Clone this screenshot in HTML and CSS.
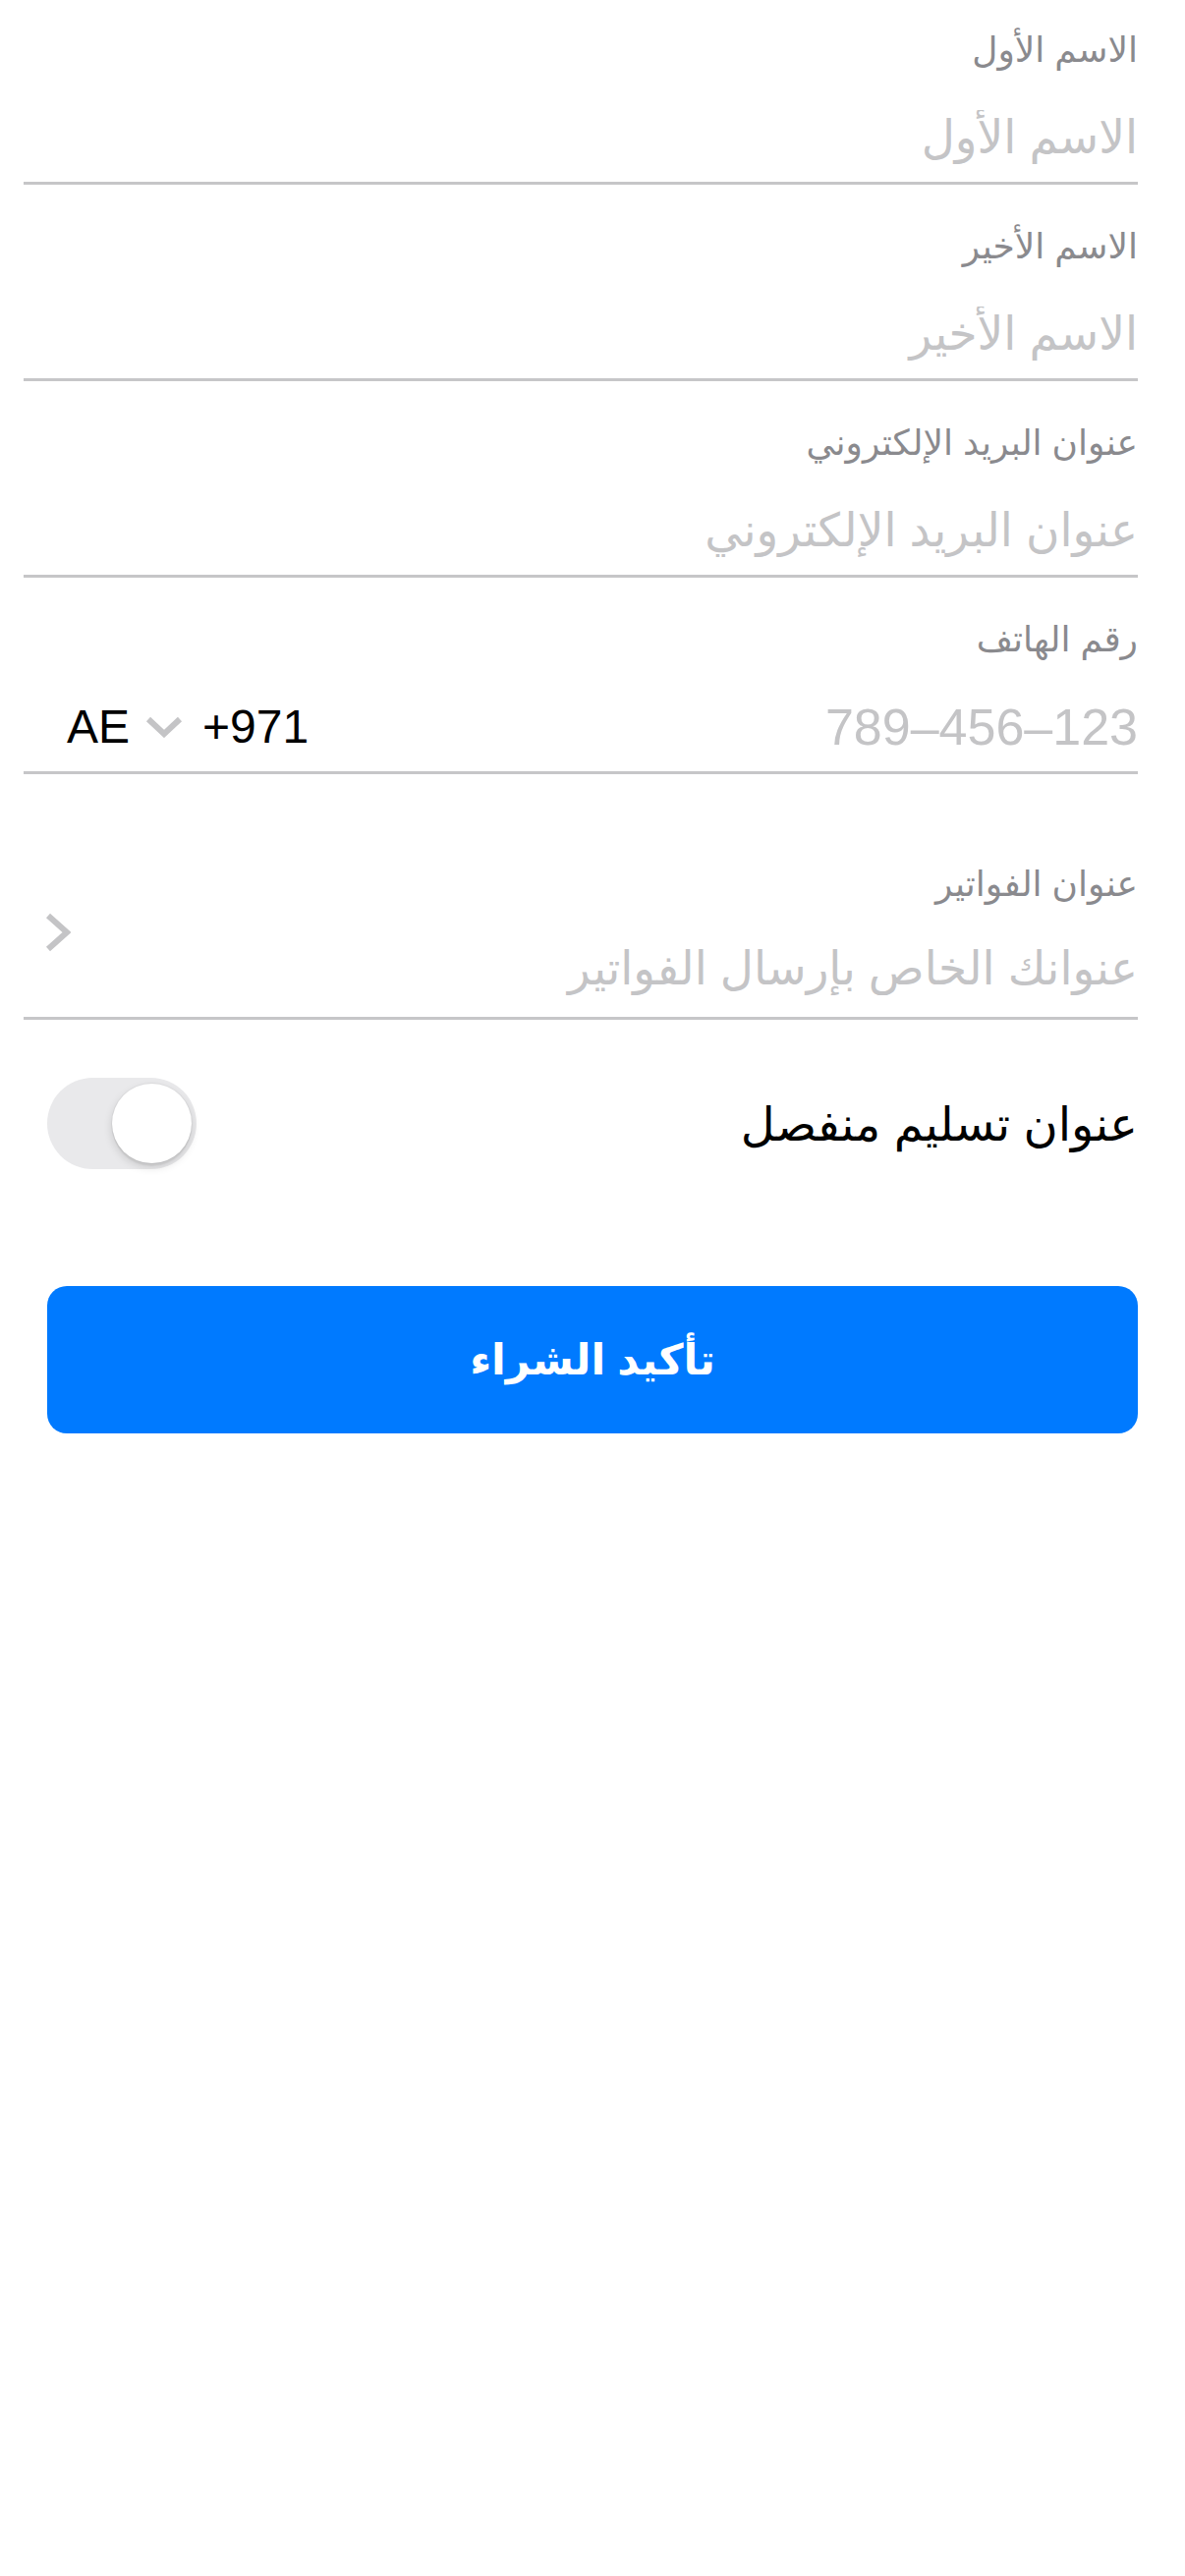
FILE: index.html
```html
<!DOCTYPE html>
<html lang="ar" dir="rtl">
<head>
<meta charset="utf-8">
<title>تأكيد الشراء</title>
<link rel="stylesheet" href="styles.css">
</head>
<body>
<main class="form">
  <div class="field field-first">
    <div class="field-label">الاسم الأول</div>
    <input class="field-input" type="text" placeholder="الاسم الأول">
  </div>
  <div class="field">
    <div class="field-label">الاسم الأخير</div>
    <input class="field-input" type="text" placeholder="الاسم الأخير">
  </div>
  <div class="field">
    <div class="field-label">عنوان البريد الإلكتروني</div>
    <input class="field-input" type="email" placeholder="عنوان البريد الإلكتروني">
  </div>
  <div class="field">
    <div class="field-label">رقم الهاتف</div>
    <div class="phone-row">
      <input class="field-input phone-input" type="tel" dir="ltr" placeholder="789–456–123">
      <div class="country" dir="ltr">
        <span class="country-code">AE</span>
        <svg class="down-chevron" width="38" height="22" viewBox="0 0 38 22"><polyline points="3,3 19,18 35,3" fill="none" stroke="#c4c4c6" stroke-width="6"/></svg>
        <span class="dial-code">+971</span>
      </div>
    </div>
  </div>
  <div class="field field-billing">
    <div class="billing-body">
      <div class="field-label">عنوان الفواتير</div>
      <input class="field-input" type="text" placeholder="عنوانك الخاص بإرسال الفواتير">
    </div>
    <svg class="right-chevron" width="26" height="40" viewBox="0 0 26 40"><polyline points="3,3 22,20 3,37" fill="none" stroke="#c4c4c6" stroke-width="6"/></svg>
  </div>
  <div class="toggle-row">
    <span class="toggle-text">عنوان تسليم منفصل</span>
    <div class="switch"><div class="knob"></div></div>
  </div>
</main>
<button class="confirm" type="button">تأكيد الشراء</button>
</body>
</html>
```
FILE: styles.css
```css
html, body {
  margin: 0;
  padding: 0;
  background: #ffffff;
}
body {
  width: 1206px;
  font-family: "Liberation Sans", "DejaVu Sans", sans-serif;
  color: #000;
}
.form {
  margin: 0 48px 0 24px;
  display: flex;
  flex-direction: column;
}
.field {
  padding: 40px 0 10px;
  border-bottom: 3px solid #c6c6c8;
  display: flex;
  flex-direction: column;
}
.field-first {
  padding-top: 28px;
}
.field-label {
  font-size: 36px;
  line-height: 46px;
  height: 46px;
  color: #8a8a8e;
  white-space: nowrap;
}
.field-input {
  margin: 31px 0 0;
  padding: 0;
  border: 0;
  outline: none;
  background: transparent;
  font-family: inherit;
  font-size: 47px;
  line-height: 70px;
  height: 70px;
  width: 100%;
  color: #000;
  text-align: right;
}
.field-input::placeholder {
  color: #c4c4c6;
  opacity: 1;
}
.phone-row {
  margin-top: 31px;
  height: 70px;
  display: flex;
  align-items: center;
}
.phone-row .field-input {
  margin: 0;
  flex: 1;
  min-width: 0;
  font-size: 52px;
}
.country {
  display: flex;
  align-items: center;
  margin-left: 44px;
  font-size: 48px;
  line-height: 70px;
  color: #000;
}
.down-chevron {
  margin: 0 20px 0 16px;
}
.field-billing {
  flex-direction: row;
  align-items: center;
  padding-top: 89px;
  padding-bottom: 14px;
}
.billing-body {
  flex: 1;
  display: flex;
  flex-direction: column;
}
.billing-body .field-input {
  margin-top: 28px;
}
.right-chevron {
  margin-left: 22px;
  flex: none;
}
.toggle-row {
  margin-top: 59px;
  height: 93px;
  display: flex;
  align-items: center;
  justify-content: space-between;
}
.toggle-text {
  font-size: 48px;
  color: #000;
}
.switch {
  position: relative;
  width: 152px;
  height: 93px;
  border-radius: 47px;
  background: #e9e9eb;
  margin-left: 24px;
}
.knob {
  position: absolute;
  top: 6px;
  right: 5px;
  width: 81px;
  height: 81px;
  border-radius: 50%;
  background: #ffffff;
  box-shadow: 0 0 0 1px rgba(0,0,0,0.04), 0 4px 10px rgba(0,0,0,0.14), 0 3px 1px rgba(0,0,0,0.05);
}
.confirm {
  display: block;
  margin: 119px 48px 0;
  width: 1110px;
  height: 150px;
  border: 0;
  border-radius: 20px;
  background: #007aff;
  color: #ffffff;
  font-family: "Liberation Sans", "DejaVu Sans", sans-serif;
  font-size: 43px;
  font-weight: bold;
  padding: 0;
}
```
